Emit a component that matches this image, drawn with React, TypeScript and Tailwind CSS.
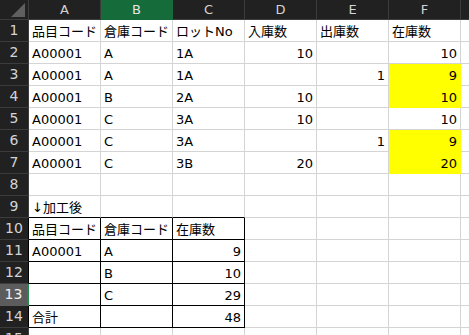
import React from 'react';

type CellDef = { v?: string; num?: boolean; fill?: boolean };

const cols = ['A', 'B', 'C', 'D', 'E', 'F'];

// sheet contents, row by row (A..F)
const rows: CellDef[][] = [
  [{ v: '品目コード' }, { v: '倉庫コード' }, { v: 'ロットNo' }, { v: '入庫数' }, { v: '出庫数' }, { v: '在庫数' }],
  [{ v: 'A00001' }, { v: 'A' }, { v: '1A' }, { v: '10', num: true }, {}, { v: '10', num: true }],
  [{ v: 'A00001' }, { v: 'A' }, { v: '1A' }, {}, { v: '1', num: true }, { v: '9', num: true, fill: true }],
  [{ v: 'A00001' }, { v: 'B' }, { v: '2A' }, { v: '10', num: true }, {}, { v: '10', num: true, fill: true }],
  [{ v: 'A00001' }, { v: 'C' }, { v: '3A' }, { v: '10', num: true }, {}, { v: '10', num: true }],
  [{ v: 'A00001' }, { v: 'C' }, { v: '3A' }, {}, { v: '1', num: true }, { v: '9', num: true, fill: true }],
  [{ v: 'A00001' }, { v: 'C' }, { v: '3B' }, { v: '20', num: true }, {}, { v: '20', num: true, fill: true }],
  [],
  [{ v: '↓加工後' }],
  [{ v: '品目コード' }, { v: '倉庫コード' }, { v: '在庫数' }],
  [{ v: 'A00001' }, { v: 'A' }, { v: '9', num: true }],
  [{}, { v: 'B' }, { v: '10', num: true }],
  [{}, { v: 'C' }, { v: '29', num: true }],
  [{ v: '合計' }, {}, { v: '48', num: true }],
  [],
];

function isBoxed(r: number, c: number) {
  return r >= 10 && r <= 14 && c <= 2;
}

function DataCell({ cell, r, c }: { cell: CellDef; r: number; c: number }) {
  const boxed = isBoxed(r, c);
  const boxBelow = r === 9 && c <= 2;
  const right = boxed ? 'border-r-black' : 'border-r-[#d4d4d4]';
  const bottom = boxed || boxBelow ? 'border-b-black' : 'border-b-[#d4d4d4]';
  return (
    <div
      className={`flex items-center overflow-hidden whitespace-nowrap border-r border-b px-[3px] pt-[2px] text-black ${right} ${bottom} ${
        cell.num ? 'justify-end' : 'justify-start'
      } ${cell.fill ? 'bg-[#ffff00] border-r-[#ffff00] border-b-[#ffff00]' : 'bg-white'}`}
    >
      {cell.v}
    </div>
  );
}

export default function App() {
  return (
    <div
      className="h-[335px] w-[469px] overflow-hidden bg-white text-[13px]"
      style={{ fontFamily: '"DejaVu Sans", "Noto Sans CJK JP", sans-serif' }}
    >
      <div className="grid grid-cols-[29px_repeat(6,72px)_1fr] grid-rows-[20px_repeat(15,22px)]">
        {/* corner */}
        <div className="relative border-r border-b border-[#3c3c3c] bg-[#212121]">
          <svg className="absolute right-[3px] bottom-[2px]" width="14" height="14" viewBox="0 0 14 14">
            <polygon points="14,0 14,14 0,14" fill="#5f5f5f" />
          </svg>
        </div>
        {cols.map((c) => (
          <div
            key={c}
            className={`flex items-center justify-center border-r border-b text-[13px] ${
              c === 'B'
                ? 'bg-[#156b3a] border-r-[#156b3a] border-b-[#156b3a] text-[#e6e6e6]'
                : 'bg-[#212121] border-[#3c3c3c] text-[#d4d4d4]'
            }`}
          >
            {c}
          </div>
        ))}
        <div className="border-b border-[#3c3c3c] bg-[#212121]" />

        {rows.map((row, i) => {
          const r = i + 1;
          const active = r === 13;
          return (
            <React.Fragment key={r}>
              <div
                className={`flex items-center justify-center border-b text-[14px] ${
                  active
                    ? 'bg-[#5c5c5c] border-b-[#5c5c5c] border-r-2 border-r-[#1e8a4c] text-[#f0f0f0]'
                    : 'bg-[#212121] border-r border-[#3c3c3c] text-[#d4d4d4]'
                } ${r >= 10 && r <= 14 && !active ? 'border-r-black' : ''}`}
              >
                {r}
              </div>
              {cols.map((_, c) => (
                <DataCell key={c} cell={row[c] ?? {}} r={r} c={c} />
              ))}
              <div className="border-b border-[#d4d4d4] bg-white" />
            </React.Fragment>
          );
        })}
      </div>
    </div>
  );
}
